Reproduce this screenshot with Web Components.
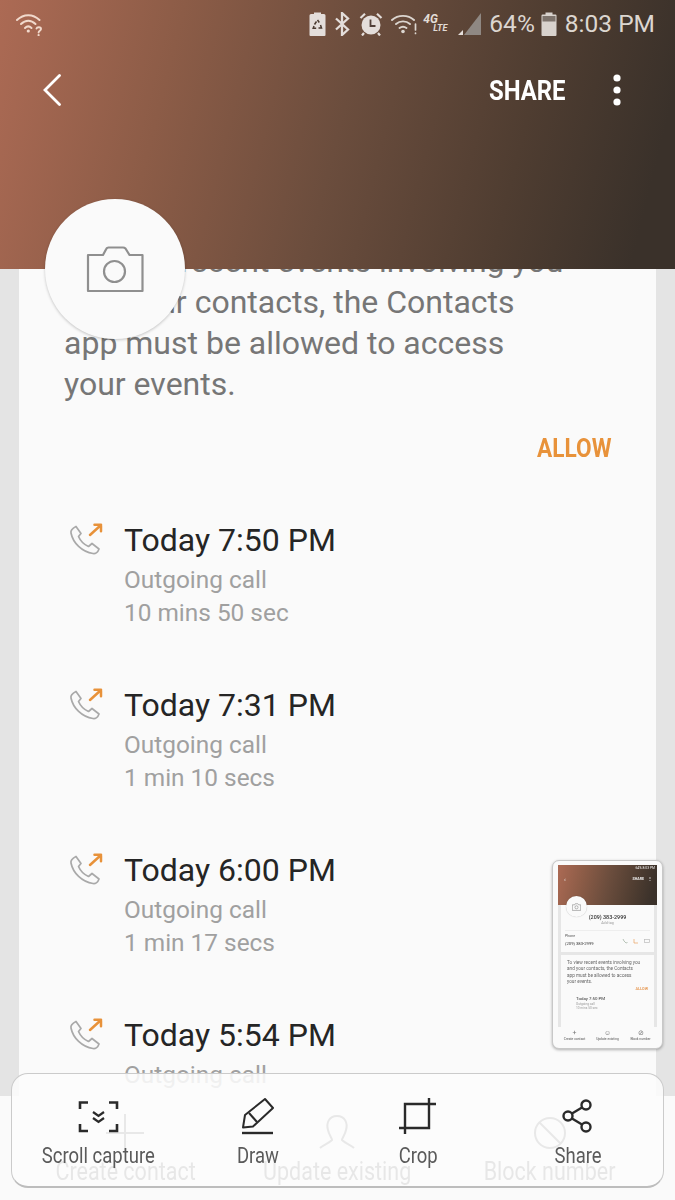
<!DOCTYPE html>
<html>
<head>
<meta charset="utf-8">
<title>Contact</title>
<style>
  html,body{margin:0;padding:0;}
  body{width:675px;height:1200px;overflow:hidden;font-family:Roboto,"Liberation Sans",sans-serif;background:#fafafa;}
</style>
</head>
<body>
<phone-screen>
  <app-header slot="header"></app-header>
  <event-card slot="main">
    <event-row time="Today 7:50 PM" kind="Outgoing call" length="10 mins 50 sec"></event-row>
    <event-row time="Today 7:31 PM" kind="Outgoing call" length="1 min 10 secs"></event-row>
    <event-row time="Today 6:00 PM" kind="Outgoing call" length="1 min 17 secs"></event-row>
    <event-row time="Today 5:54 PM" kind="Outgoing call"></event-row>
  </event-card>
  <action-bar slot="actions"></action-bar>
  <photo-badge slot="over"></photo-badge>
  <mini-screen slot="over"></mini-screen>
  <capture-bar slot="over"></capture-bar>
</phone-screen>

<script>
const HEADER_BG = "linear-gradient(104deg,#ac6a54 0%,#8c5c47 25%,#6b4d3d 50%,#4f3d31 75%,#3a312a 94%)";

class PhoneScreen extends HTMLElement {
  constructor() {
    super();
    this.attachShadow({ mode: "open" });
    this.shadowRoot.innerHTML = `
<style>
  :host{display:flex;flex-direction:column;width:675px;height:1200px;position:relative;overflow:hidden;}
  .main{height:827px;background:#e4e4e4;padding:0 19px;overflow:hidden;box-sizing:border-box;}
  .foot{flex:1;background:#fafafa;}
</style>
<slot name="header"></slot>
<div class="main"><slot name="main"></slot></div>
<div class="foot"><slot name="actions"></slot></div>
<slot name="over"></slot>`;
  }
}

class AppHeader extends HTMLElement {
  constructor() {
    super();
    this.attachShadow({ mode: "open" });
    this.shadowRoot.innerHTML = `
<style>
  :host{display:block;height:269px;background:${HEADER_BG};font-family:Roboto,sans-serif;position:relative;z-index:1;}
  .status{display:flex;align-items:center;height:45px;box-sizing:border-box;padding:2px 20px 0 16px;color:#dcd6d0;font-size:24.500px;}
  .right{margin-left:auto;display:flex;align-items:center;}
  svg{display:block;}
  .lte{font-weight:700;font-style:italic;color:#e2dcd6;width:24px;line-height:9px;font-size:12px;text-align:left;margin:0 11px 0 6px;}
  .lte small{display:block;font-size:9px;text-align:right;line-height:9px;}
  .bar{display:flex;align-items:center;height:90px;padding:0 0 0 43px;}
  .share{margin-left:auto;margin-top:2px;color:#fff;font-weight:700;font-size:27px;display:inline-block;transform:scaleX(.885);transform-origin:right center;}
  .dots{margin:0 54px 0 47px;}
</style>
<div class="status">
  <svg width="28" height="24" viewBox="0 0 28 24" fill="none" stroke="#f1d9cc" stroke-width="2" stroke-linecap="round">
    <path d="M1 8C7.500 1.500 17 1.500 23.500 8"/><path d="M5 12C9.500 7.500 15 7.500 19.500 12"/><path d="M9 16C11 14 13.500 14 15.500 16"/>
    <circle cx="12.300" cy="19" r="1.600" fill="#f1d9cc" stroke="none"/>
    <path d="M20.500 16.500c.5-1.800 4.500-1.800 4.500.4 0 1.800-2.400 1.800-2.400 3.600" stroke-width="1.900"/>
    <circle cx="22.600" cy="23" r="1.100" fill="#f1d9cc" stroke="none"/>
  </svg>
  <div class="right">
    <svg width="17" height="24" viewBox="0 0 17 24" style="margin-right:8px"><path d="M5 2V0.500h7V2h3a1.500 1.500 0 0 1 1.500 1.500V23a1 1 0 0 1-1 1H1.500a1 1 0 0 1-1-1V3.500A1.500 1.500 0 0 1 2 2Z" fill="#e4dedb"/><path d="M8.500 8l1.800 2.500M7.500 9.500L5.500 12.500M11.500 13l1 3h-3M5 14l-.8 2.200h3" fill="none" stroke="#4a3a30" stroke-width="1.500"/></svg>
    <svg width="17" height="24" viewBox="0 0 17 24" fill="none" stroke="#e4dedb" stroke-width="2.300" style="margin-right:8px"><path d="M2 6.500L14 17.500L8 23V1L14 6.500L2 17.500"/></svg>
    <svg width="24" height="24" viewBox="0 0 24 24" style="margin-right:8px"><circle cx="12" cy="13" r="9.500" fill="#e4dedb"/><path d="M11.500 7.500v6.500h5" fill="none" stroke="#52413a" stroke-width="1.800"/><path d="M1.500 6L6 1.800M22.500 6L18 1.800M5 21l-2 2.500M19 21l2 2.500" stroke="#e4dedb" stroke-width="2.200" fill="none"/></svg>
    <svg width="26" height="22" viewBox="0 0 26 22" fill="none" stroke="#dcd6d0" stroke-width="1.900" stroke-linecap="round"><path d="M1 7C7 1.500 17 1.500 23 7" /><path d="M5 11C9 7.500 15 7.500 19 11"/><path d="M8.500 15C10.500 13.500 13.500 13.500 15.500 15"/><circle cx="12" cy="18.500" r="1.800" fill="#dcd6d0" stroke="none"/><path d="M24.500 11v6M24.500 20v.5" stroke-width="1.700"/></svg>
    <div class="lte">4G<small>LTE</small></div>
    <svg width="23" height="22" viewBox="0 0 23 22" style="margin-right:8px"><path d="M23 0V22H6Z" fill="#8f8883"/><path d="M5 17V22H0Z" fill="#e4dedb"/></svg>
    <span>64%</span>
    <svg width="16" height="24" viewBox="0 0 16 24" style="margin:0 8px 0 6px"><path d="M4.500 0.500h7V2.500h3a1 1 0 0 1 1 1V23a1 1 0 0 1-1 1h-13a1 1 0 0 1-1-1V3.500a1 1 0 0 1 1-1h3Z" fill="#d8d2cd"/><rect x="1.500" y="4" width="13" height="5.500" fill="#7d736c"/></svg>
    <span>8:03 PM</span>
  </div>
</div>
<div class="bar">
  <svg width="18" height="32" viewBox="0 0 18 32" fill="none" stroke="#fff" stroke-width="2.800" stroke-linecap="round"><path d="M16.500 1.500L2 16L16.500 30.500"/></svg>
  <span class="share">SHARE</span>
  <svg class="dots" width="8" height="32" viewBox="0 0 8 32" fill="#fff"><circle cx="4" cy="4" r="3.600"/><circle cx="4" cy="16" r="3.600"/><circle cx="4" cy="28" r="3.600"/></svg>
</div>`;
  }
}

class PhotoBadge extends HTMLElement {
  constructor() {
    super();
    this.attachShadow({ mode: "open" });
    this.shadowRoot.innerHTML = `
<style>
  :host{position:absolute;left:45px;top:199px;width:140px;height:140px;border-radius:50%;background:#fafafa;
    box-shadow:0 1px 3px rgba(0,0,0,.22);display:flex;align-items:center;justify-content:center;z-index:2;}
</style>
<svg width="58" height="48" viewBox="0 0 58 48" fill="none" stroke="#8f8f8f" stroke-width="2.200" stroke-linejoin="round">
  <path d="M2 10H17L20.500 3.500Q21 2.500 22.500 2.500H37Q38.500 2.500 39.500 3.500L43.500 10H56.500V46H2Z"/>
  <circle cx="28.500" cy="26.500" r="10.500"/>
</svg>`;
  }
}

class EventCard extends HTMLElement {
  constructor() {
    super();
    this.attachShadow({ mode: "open" });
    this.shadowRoot.innerHTML = `
<style>
  :host{display:block;background:#fafafa;margin-top:-28px;padding:0 45px;font-family:Roboto,sans-serif;}
  p{margin:0;font-size:32px;line-height:41px;color:#767676;white-space:nowrap;}
  .allow{display:flex;justify-content:flex-end;margin-top:28px;margin-bottom:50px;}
  .allow span{display:inline-block;font-size:26px;line-height:30px;font-weight:700;color:#e8923a;transform:scaleX(.87);transform-origin:right center;}
</style>
<p>To view recent events involving you<br>and your contacts, the Contacts<br>app must be allowed to access<br>your events.</p>
<div class="allow"><span>ALLOW</span></div>
<slot></slot>`;
  }
}

class EventRow extends HTMLElement {
  constructor() {
    super();
    this.attachShadow({ mode: "open" });
    this.shadowRoot.innerHTML = `
<style>
  :host{display:flex;height:165px;margin-left:5px;font-family:Roboto,sans-serif;box-sizing:border-box;padding-top:7px;}
  svg{flex:none;width:34px;height:34px;margin-right:21px;margin-top:3px;}
  .t{font-size:32px;line-height:40px;color:#252525;}
  .s{font-size:24.400px;line-height:33px;color:#a0a0a0;}
  .s.first{margin-top:3px;}
</style>
<svg viewBox="0 0 34 34" fill="none" stroke-linecap="round" stroke-linejoin="round">
  <path d="M2 10C1.500 7.500 3 5.500 7 3.500L12 10.500L9.500 13.500C11 17 15 21.500 19.500 23.500L23 20.500L30 26C29 29 26.500 31 24 30.500C13 29 4 20 2 10Z" stroke="#a9a9a9" stroke-width="1.700"/>
  <path d="M21 12L32 2M25.500 1.800H32V8.300" stroke="#e8923a" stroke-width="2.500"/>
</svg>
<div>
  <div class="t"></div>
  <div class="s first"></div>
  <div class="s last"></div>
</div>`;
  }
  connectedCallback() {
    this.shadowRoot.querySelector(".t").textContent = this.getAttribute("time");
    this.shadowRoot.querySelector(".first").textContent = this.getAttribute("kind");
    this.shadowRoot.querySelector(".last").textContent = this.getAttribute("length") || "";
  }
}

class ActionBar extends HTMLElement {
  constructor() {
    super();
    this.attachShadow({ mode: "open" });
    this.shadowRoot.innerHTML = `
<style>
  :host{display:grid;grid-template-columns:repeat(3,1fr);margin:0 19px;height:104px;font-family:Roboto,sans-serif;}
  div{display:flex;flex-direction:column;align-items:center;padding-top:18px;color:#5e5e5e;}
  svg{height:38px;width:38px;display:block;}
  span{display:inline-block;font-size:25px;line-height:30px;margin-top:5px;transform:scaleX(.86);white-space:nowrap;}
</style>
<div><svg viewBox="0 0 38 38" fill="none" stroke="#666" stroke-width="2"><path d="M19 0V38M0 19H38"/></svg><span>Create contact</span></div>
<div><svg viewBox="0 0 38 38" fill="none" stroke="#666" stroke-width="2"><path d="M19 2C27 2 30 9 28 16C27 21 24 24 24 26C28 30 33 31 36 34M19 2C11 2 8 9 10 16C11 21 14 24 14 26C10 30 5 31 2 34"/></svg><span>Update existing</span></div>
<div><svg viewBox="0 0 38 38" fill="none" stroke="#666" stroke-width="2"><circle cx="19" cy="19" r="15"/><path d="M8.500 8.500L29.500 29.500"/></svg><span>Block number</span></div>`;
  }
}

class MiniScreen extends HTMLElement {
  constructor() {
    super();
    this.attachShadow({ mode: "open" });
    this.shadowRoot.innerHTML = `
<style>
  :host{position:absolute;left:552px;top:860px;width:111px;height:189px;box-sizing:border-box;padding:4px 5px;background:#fafafa;
    border:1.500px solid #c8c8c8;border-radius:7px;box-shadow:0 1px 3px rgba(0,0,0,.3);font-family:Roboto,sans-serif;z-index:3;}
  .in{height:100%;background:#e6e6e6;display:flex;flex-direction:column;overflow:hidden;position:relative;color:#555;font-size:3.600px;filter:blur(.45px);}
  .top{height:40px;background:${HEADER_BG};color:#eee;flex:none;box-sizing:border-box;padding:1px 2px;}
  .st{font-size:3.400px;text-align:right;line-height:5px;}
  .sh{display:flex;justify-content:flex-end;align-items:center;gap:4px;font-size:3.600px;font-weight:700;line-height:12px;padding:2px 3px 0 4px;}
  .sh u{text-decoration:none;margin-right:auto;font-weight:400;font-size:6px;}
  .cir{position:absolute;left:8px;top:31px;width:21px;height:21px;border-radius:50%;background:#fafafa;box-shadow:0 0 1px rgba(0,0,0,.3);display:flex;align-items:center;justify-content:center;}
  .cir svg{width:9px;height:8px;}
  .c1,.c2{background:#fafafa;margin:0 3px;}
  .c1{height:47px;flex:none;box-sizing:border-box;padding-top:9px;text-align:center;}
  .num{font-size:5.400px;font-weight:500;color:#333;line-height:6px;}
  .tag{font-size:3.600px;line-height:6px;color:#999;}
  .ph{display:flex;justify-content:space-between;align-items:center;text-align:left;margin:4px 4px 0;border-top:1px solid #eee;padding-top:2px;font-size:3.600px;line-height:7px;}
  .ph b{font-weight:400;color:#333;font-size:4.200px;}
  .ph span{display:flex;gap:5px;}
  .ph span svg{width:6px;height:6px;}
  .c2{flex:1;margin-top:3px;padding:5px 6px;font-size:4.700px;line-height:6.300px;overflow:hidden;color:#666;white-space:nowrap;}
  .al{text-align:right;font-size:3.800px;font-weight:700;color:#e8a060;margin-top:1px;}
  .r{margin-top:4px;color:#333;font-size:4.400px;padding-left:9px;}
  .r small{display:block;font-size:3.200px;line-height:3.800px;color:#999;}
  .bt{height:17px;flex:none;background:#fafafa;display:grid;grid-template-columns:repeat(3,1fr);text-align:center;font-size:3.300px;line-height:4px;color:#555;padding-top:2px;box-sizing:border-box;white-space:nowrap;}
  .bt em{display:block;font-style:normal;font-size:7px;line-height:8px;color:#777;}
</style>
<div class="in">
  <div class="top"><div class="st">64% 8:03 PM</div><div class="sh"><u>&lsaquo;</u>SHARE <span>&#8942;</span></div></div>
  <div class="cir"><svg viewBox="0 0 58 48" fill="none" stroke="#888" stroke-width="4"><path d="M2 10H17L21 3H38L43 10H56V46H2Z"/><circle cx="29" cy="26" r="10"/></svg></div>
  <div class="c1">
    <div class="num">(209) 383-2999</div>
    <div class="tag">Add tag</div>
    <div class="ph"><div>Phone<br><b>(209) 383-2999</b></div>
      <span>
        <svg viewBox="0 0 6 6" fill="none" stroke="#9a9" stroke-width=".7"><path d="M1 1L2 3L4 5L5.500 4.500"/></svg>
        <svg viewBox="0 0 6 6" fill="none" stroke="#e8a060" stroke-width=".7"><path d="M1 1V5H5"/></svg>
        <svg viewBox="0 0 6 6" fill="none" stroke="#bbb" stroke-width=".7"><rect x=".5" y="1.500" width="5" height="3"/></svg>
      </span>
    </div>
  </div>
  <div class="c2">To view recent events involving you<br>and your contacts, the Contacts<br>app must be allowed to access<br>your events.
    <div class="al">ALLOW</div>
    <div class="r">Today 7:50 PM<small>Outgoing call</small><small>10 mins 50 sec</small></div>
  </div>
  <div class="bt"><div><em>+</em>Create contact</div><div><em>&#9786;</em>Update existing</div><div><em>&#8856;</em>Block number</div></div>
</div>`;
  }
}

class CaptureBar extends HTMLElement {
  constructor() {
    super();
    this.attachShadow({ mode: "open" });
    this.shadowRoot.innerHTML = `
<style>
  :host{position:absolute;left:11px;top:1073px;width:653px;height:115px;box-sizing:border-box;border:1px solid #cbcbcb;border-bottom:2px solid #bdbdbd;
    border-radius:17px;background:rgba(251,251,251,.87);display:grid;grid-template-columns:repeat(4,160px);padding-left:6px;font-family:Roboto,sans-serif;z-index:4;}
  div{display:flex;flex-direction:column;align-items:center;padding-top:24px;}
  svg{width:44px;height:38px;display:block;}
  span{display:inline-block;font-size:22px;line-height:26px;color:#5a5a5a;margin-top:7px;transform:scaleX(.84);white-space:nowrap;}
</style>
<div><svg viewBox="0 0 44 38" fill="none" stroke="#2a2a2a" stroke-width="2.600"><path d="M4 11V4.500H12M33 4.500H41V11M4 26V33H12M33 33H41V26"/><path d="M17 14L22.500 18L28 14M17 20L22.500 24L28 20" stroke-width="2.200"/></svg><span>Scroll capture</span></div>
<div><svg viewBox="0 0 44 38" fill="none" stroke="#2a2a2a" stroke-width="2" stroke-linejoin="round"><path d="M29 1L37 10L17 28.500L7 29.500L9 17Z"/><path d="M13 15L21 24"/><path d="M6 35H37" stroke-width="2.400"/></svg><span>Draw</span></div>
<div><svg viewBox="0 0 44 38" fill="none" stroke="#2a2a2a" stroke-width="2.400"><path d="M3 30H33V0M40 6H9V36"/></svg><span>Crop</span></div>
<div><svg viewBox="0 0 44 38" fill="none" stroke="#2a2a2a" stroke-width="2.400"><circle cx="30" cy="7" r="4.500"/><circle cx="12" cy="18" r="4.500"/><circle cx="30" cy="29" r="4.500"/><path d="M16 15.500L26 9.500M16 20.500L26 26.500"/></svg><span>Share</span></div>`;
  }
}

customElements.define("phone-screen", PhoneScreen);
customElements.define("app-header", AppHeader);
customElements.define("photo-badge", PhotoBadge);
customElements.define("event-card", EventCard);
customElements.define("event-row", EventRow);
customElements.define("action-bar", ActionBar);
customElements.define("mini-screen", MiniScreen);
customElements.define("capture-bar", CaptureBar);
</script>
</body>
</html>
